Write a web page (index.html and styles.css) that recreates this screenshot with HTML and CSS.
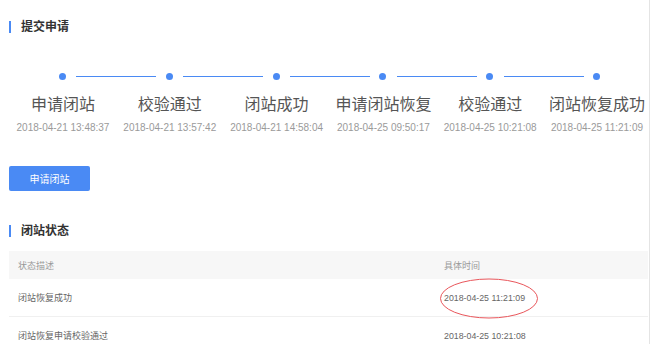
FILE: index.html
```html
<!DOCTYPE html>
<html lang="zh-CN">
<head>
<meta charset="utf-8">
<title>闭站申请</title>
<link rel="stylesheet" href="styles.css">
</head>
<body>
<div class="page">
  <h2 class="section-title">提交申请</h2>

  <div class="steps">
    <div class="track">
      <span class="dot"></span><span class="line"></span>
      <span class="dot"></span><span class="line"></span>
      <span class="dot"></span><span class="line"></span>
      <span class="dot"></span><span class="line"></span>
      <span class="dot"></span><span class="line"></span>
      <span class="dot"></span>
    </div>
    <div class="labels">
      <div class="step"><div class="step-name">申请闭站</div><div class="step-time">2018-04-21 13:48:37</div></div>
      <div class="step"><div class="step-name">校验通过</div><div class="step-time">2018-04-21 13:57:42</div></div>
      <div class="step"><div class="step-name">闭站成功</div><div class="step-time">2018-04-21 14:58:04</div></div>
      <div class="step"><div class="step-name">申请闭站恢复</div><div class="step-time">2018-04-25 09:50:17</div></div>
      <div class="step"><div class="step-name">校验通过</div><div class="step-time">2018-04-25 10:21:08</div></div>
      <div class="step"><div class="step-name">闭站恢复成功</div><div class="step-time">2018-04-25 11:21:09</div></div>
    </div>
  </div>

  <button class="btn-primary" type="button">申请闭站</button>

  <h2 class="section-title section-title-2">闭站状态</h2>

  <div class="table">
    <div class="row head">
      <div class="cell c1">状态描述</div>
      <div class="cell c2">具体时间</div>
    </div>
    <div class="row">
      <div class="cell c1">闭站恢复成功</div>
      <div class="cell c2 time marked">2018-04-25 11:21:09
        <svg class="mark" width="100" height="41" viewBox="0 0 100 41"><ellipse cx="50" cy="20.5" rx="48.5" ry="19.5" fill="none" stroke="#e9565b" stroke-width="1"/></svg>
      </div>
    </div>
    <div class="row">
      <div class="cell c1">闭站恢复申请校验通过</div>
      <div class="cell c2 time">2018-04-25 10:21:08</div>
    </div>
  </div>
</div>
</body>
</html>
```

FILE: styles.css
```css
* { box-sizing: border-box; }
html, body { margin: 0; padding: 0; background: #fff; }
body {
  font-family: "Liberation Sans", "Noto Sans CJK SC", sans-serif;
  overflow: hidden;
}
.page {
  width: 650px;
  height: 344px;
  padding: 21px 0 0 9px;
  border-right: 1px solid #e4e4e4;
  overflow: hidden;
}
.section-title {
  margin: 0;
  height: 12px;
  display: flex;
  align-items: center;
  border-left: 2px solid #4a8af4;
  padding-left: 10px;
  font-size: 12px;
  line-height: 12px;
  font-weight: bold;
  color: #333;
}
.steps { margin-top: 40px; }
.track {
  display: flex;
  align-items: center;
  height: 7px;
  padding-left: 50.1px;
}
.dot {
  width: 7px;
  height: 7px;
  border-radius: 50%;
  background: #4a8af4;
  flex: none;
}
.line {
  width: 80px;
  height: 1px;
  background: #4a8af4;
  margin: 0 9.4px 0 10.4px;
  flex: none;
}
.labels {
  display: grid;
  grid-template-columns: repeat(6, 106.8px);
  margin-left: 0.6px;
  margin-top: 14.5px;
}
.step {
  display: flex;
  flex-direction: column;
  align-items: center;
  white-space: nowrap;
}
.step-name {
  font-size: 16px;
  line-height: 20px;
  color: #555;
}
.step-time {
  margin-top: 6px;
  font-size: 10px;
  line-height: 14px;
  color: #9a9a9a;
}
.btn-primary {
  display: block;
  margin-top: 31.5px;
  width: 81px;
  height: 25px;
  border: 0;
  border-radius: 2px;
  background: #4a8af4;
  color: #fff;
  font-family: "Noto Sans CJK SC", sans-serif;
  font-size: 10px;
  line-height: 25px;
  padding: 0;
}
.section-title-2 { margin-top: 34px; }
.table {
  margin-top: 14px;
  width: 639px;
  font-size: 9px;
  color: #666;
}
.row {
  display: flex;
  height: 38px;
  align-items: center;
  border-bottom: 1px solid #f0f0f0;
}
.row.head {
  height: 28px;
  background: #f7f7f7;
  color: #999;
  border-bottom: 0;
}
.cell { padding-left: 9px; white-space: nowrap; }
.c1 { width: 426px; }
.c2 { flex: 1; }
.time { font-size: 8.8px; }
.marked { position: relative; }
.mark {
  position: absolute;
  left: 4px;
  top: -15px;
}
```
